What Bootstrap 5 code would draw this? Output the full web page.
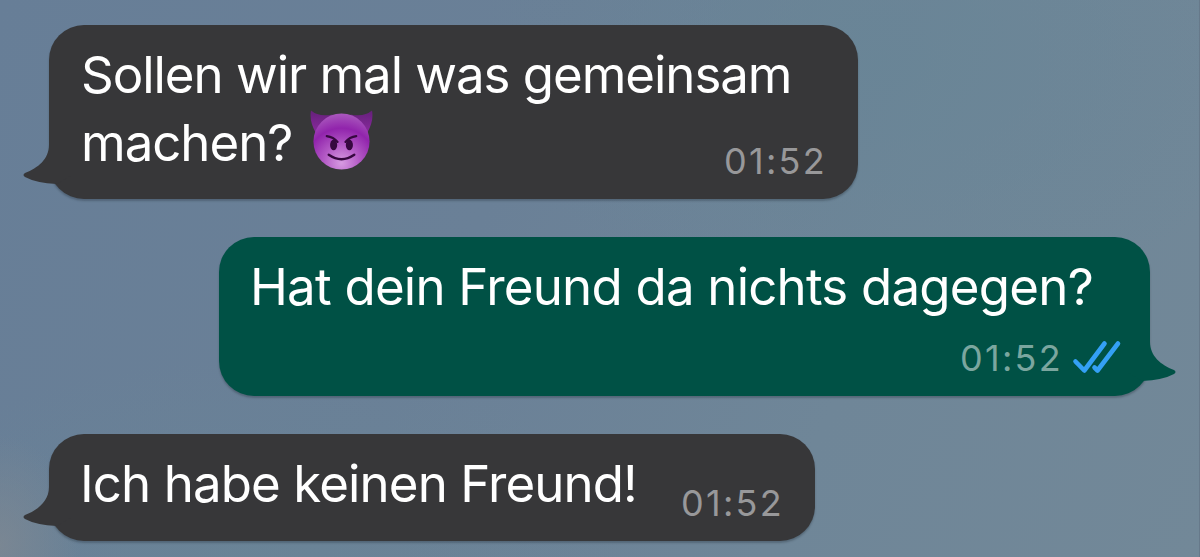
<!DOCTYPE html>
<html lang="de">
<head>
  <meta charset="UTF-8">
  <meta name="viewport" content="width=device-width, initial-scale=1">
  <title>Chat</title>
  <link href="https://cdn.jsdelivr.net/npm/bootstrap@5.3.0/dist/css/bootstrap.min.css" rel="stylesheet">
  <style>
    body {
      height: 557px;
      overflow: hidden;
      font-family: Inter, "Liberation Sans", sans-serif;
      background:
        radial-gradient(ellipse 80px 110px at 0 545px, rgba(126, 136, 146, .8), rgba(126, 136, 146, 0)),
        radial-gradient(ellipse 400px 200px at 250px 560px, rgba(106, 133, 150, .7), rgba(106, 133, 150, 0)),
        radial-gradient(ellipse 400px 260px at 880px 60px, rgba(104, 133, 150, .8), rgba(104, 133, 150, 0)),
        linear-gradient(115deg, #677e97 0%, #6a8097 40%, #6f8698 70%, #728898 100%);
    }
    .chat {
      height: 557px;
      padding: 25px 49px 0;
      gap: 38px;
      border-right: 1px solid #67798a;
    }
    .bubble {
      position: relative;
      padding: 15.5px 34px 20px 32px;
      border-radius: 35px;
      color: #fff;
      box-shadow: 0 2px 2px rgba(30, 40, 50, .3);
    }
    .bubble-in {
      background-color: #373739;
    }
    .bubble-out {
      background-color: #005145;
    }
    .msg-1 { width: 809px; height: 174px; }
    .msg-2 { width: 931px; height: 159px; }
    .msg-3 { width: 766px; height: 107px; }
    .msg-text {
      font-size: 51px;
      line-height: 68px;
      letter-spacing: -1.04px;
      white-space: nowrap;
    }
    .msg-2 .msg-text {
      letter-spacing: -.78px;
      margin-left: -1px;
    }
    .msg-3 .msg-text {
      letter-spacing: -.9px;
      margin-left: -1px;
    }
    .msg-time {
      font-size: 36px;
      line-height: 36px;
      letter-spacing: 2.3px;
      margin-right: -3px;
      color: #98989a;
    }
    .bubble-out .msg-time {
      margin-right: 9px;
      color: #7ba69f;
    }
    .tail {
      position: absolute;
      bottom: 13px;
      width: 50px;
      height: 56px;
    }
    .bubble-in .tail {
      left: -27px;
      fill: #373739;
    }
    .bubble-out .tail {
      right: -27px;
      fill: #005145;
      transform: scaleX(-1);
    }
    .emoji {
      width: 63px;
      height: 62px;
      margin-left: 18px;
    }
    .checks {
      width: 50px;
      height: 34px;
      margin: 0 -6px 2px 0;
    }
  </style>
</head>
<body>

<main class="chat d-flex flex-column">

  <div class="bubble bubble-in msg-1 d-flex flex-column align-self-start">
    <svg class="tail" viewBox="0 0 50 56"><path d="M27 0 V15 C27 29 16 38 3 43 Q0 45 3 47 Q14 53 35 54 L50 45 V0 Z"/></svg>
    <div class="msg-text">Sollen wir mal was gemeinsam</div>
    <div class="d-flex flex-grow-1 justify-content-between">
      <div class="msg-text d-flex">
        <span>machen?</span>
        <svg class="emoji" viewBox="0 0 64 62">
          <defs>
            <radialGradient id="face" cx=".5" cy=".88" r=".88">
              <stop offset="0" stop-color="#d79be2"/>
              <stop offset=".35" stop-color="#b45cc6"/>
              <stop offset=".7" stop-color="#9124ac"/>
              <stop offset="1" stop-color="#a958bd"/>
            </radialGradient>
            <linearGradient id="horn" x1="0" y1="0" x2="0" y2="1">
              <stop offset="0" stop-color="#65207a"/>
              <stop offset="1" stop-color="#8a2a9f"/>
            </linearGradient>
          </defs>
          <path d="M1 1 Q9 8 23 5 L6 24 Q-1 12 1 1 Z M63 1 Q55 8 41 5 L58 24 Q65 12 63 1 Z" fill="url(#horn)"/>
          <circle cx="32" cy="32.5" r="28.5" fill="url(#face)"/>
          <path d="M17 27 Q24 28 28 33 M47 27 Q40 28 36 33" fill="none" stroke="#36083f" stroke-width="2.2" stroke-linecap="round"/>
          <ellipse cx="24" cy="36" rx="3.6" ry="5.4" fill="#36083f"/>
          <ellipse cx="40" cy="36" rx="3.6" ry="5.4" fill="#36083f"/>
          <path d="M19 46 Q32 55 45 46" fill="none" stroke="#36083f" stroke-width="2.4" stroke-linecap="round"/>
        </svg>
      </div>
      <span class="msg-time align-self-end">01:52</span>
    </div>
  </div>

  <div class="bubble bubble-out msg-2 d-flex flex-column align-self-end">
    <svg class="tail" viewBox="0 0 50 56"><path d="M27 0 V15 C27 29 16 38 3 43 Q0 45 3 47 Q14 53 35 54 L50 45 V0 Z"/></svg>
    <div class="msg-text">Hat dein Freund da nichts dagegen?</div>
    <div class="d-flex flex-grow-1 justify-content-end align-items-end">
      <span class="msg-time">01:52</span>
      <svg class="checks" viewBox="0 0 50 34"><path d="M3.5 21.5 L12.3 30.5 L32.5 3.5 M22.5 27.5 L25.5 30.5 L46 3.500" fill="none" stroke="#34a0f5" stroke-width="4.6" stroke-linecap="round" stroke-linejoin="round"/></svg>
    </div>
  </div>

  <div class="bubble bubble-in msg-3 d-flex justify-content-between align-self-start">
    <svg class="tail" viewBox="0 0 50 56"><path d="M27 0 V15 C27 29 16 38 3 43 Q0 45 3 47 Q14 53 35 54 L50 45 V0 Z"/></svg>
    <div class="msg-text">Ich habe keinen Freund!</div>
    <span class="msg-time align-self-end">01:52</span>
  </div>

</main>

<script src="https://cdn.jsdelivr.net/npm/bootstrap@5.3.0/dist/js/bootstrap.bundle.min.js"></script>
</body>
</html>
